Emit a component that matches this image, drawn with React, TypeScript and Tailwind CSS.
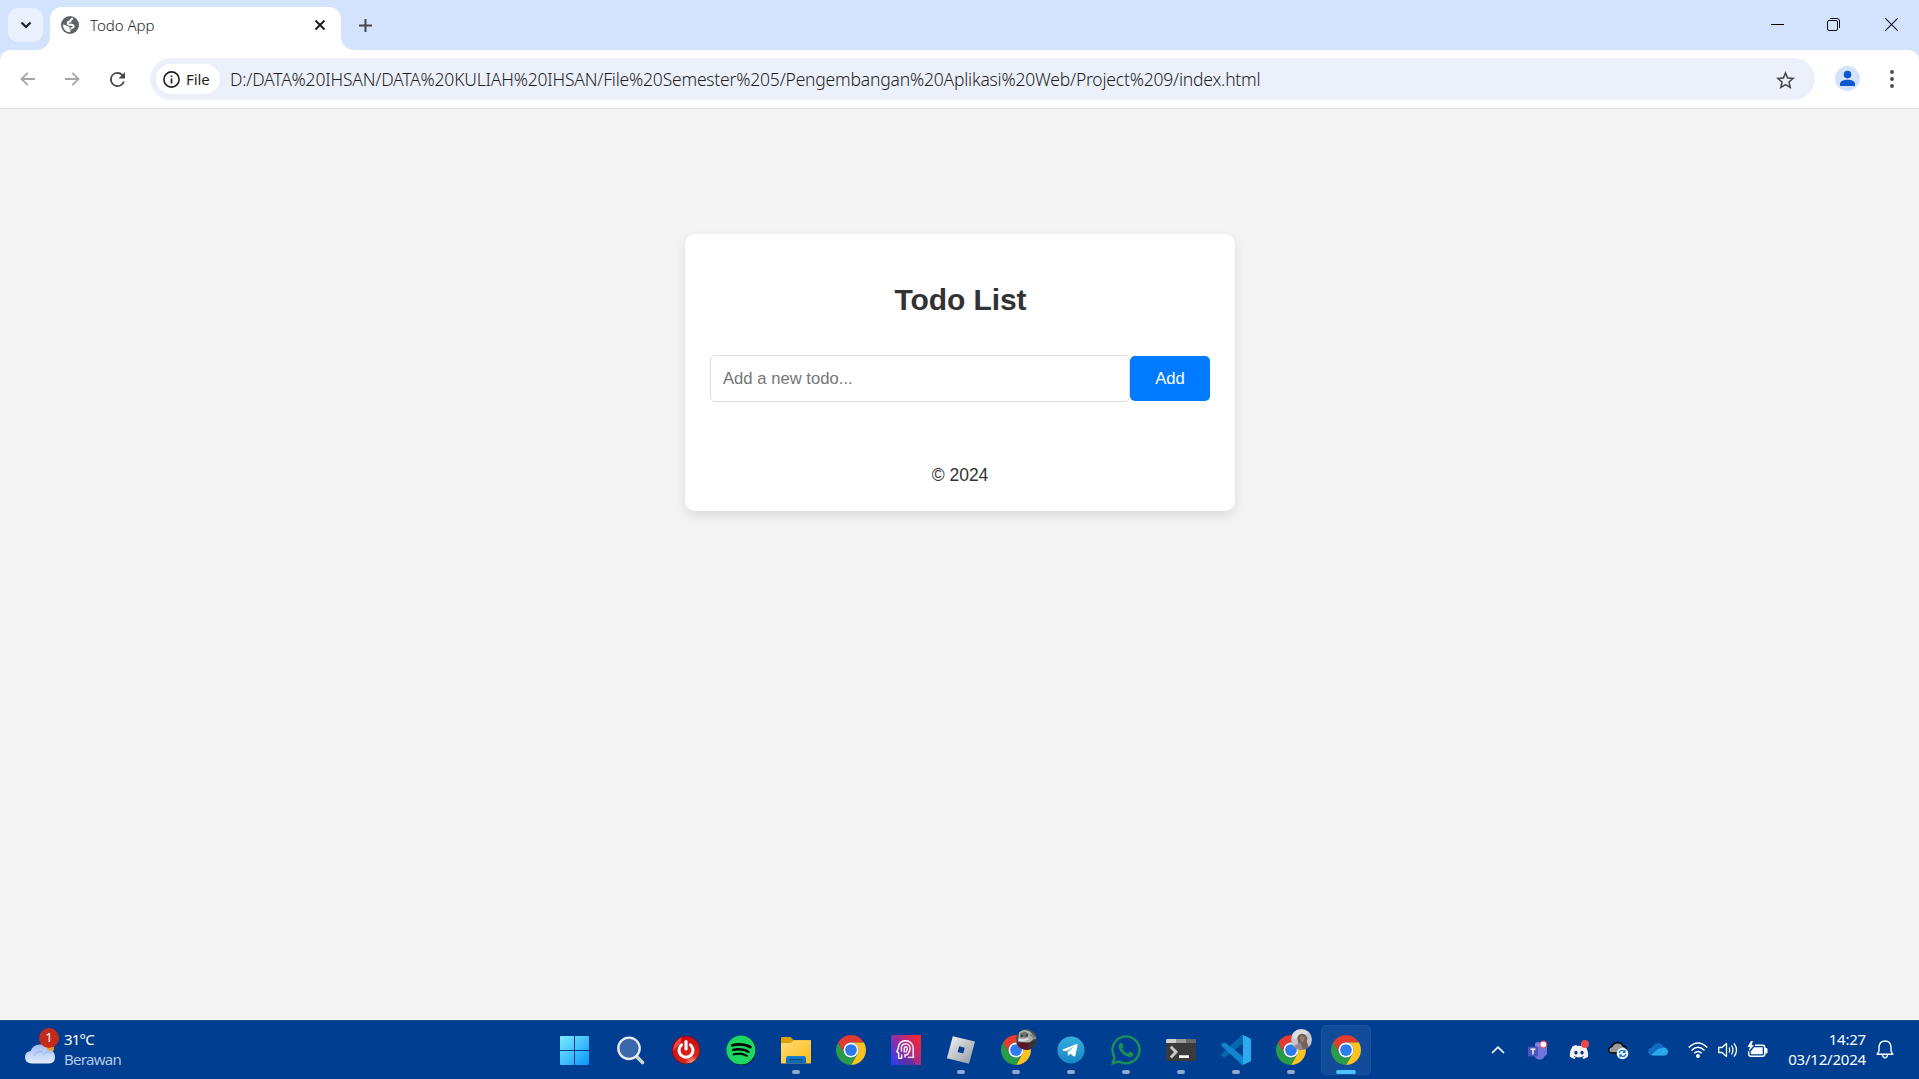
import React from "react";
import { FaSpotify, FaWhatsapp, FaDiscord } from "react-icons/fa";

function ChromeLogo() {
  return (
    <svg viewBox="0 0 48 48" className="size-[30px]">
      <path fill="#e33b2e" d="M24 12H44.78A24 24 0 0 0 3.22 12L13.61 30A12 12 0 0 1 24 12Z" />
      <path fill="#fcc31e" d="M34.39 30L24 48A24 24 0 0 0 44.78 12H24A12 12 0 0 1 34.39 30Z" />
      <path fill="#2a9c48" d="M13.61 30L3.22 12A24 24 0 0 0 24 48L34.39 30A12 12 0 0 1 13.61 30Z" />
      <circle cx="24" cy="24" r="12" fill="#fff" />
      <circle cx="24" cy="24" r="9.4" fill="#2f7bee" />
    </svg>
  );
}

function ChromeProfile({ kind }: { kind: "train" | "person" }) {
  return (
    <div className="relative size-[30px]">
      <ChromeLogo />
      <svg viewBox="0 0 20 20" className="absolute -top-[6px] left-[15px] size-[21px]">
        <defs>
          <clipPath id={"clip-" + kind}><circle cx="10" cy="10" r="10" /></clipPath>
        </defs>
        {kind === "train" ? (
          <g clipPath="url(#clip-train)">
            <rect width="20" height="20" fill="#4c524f" />
            <path d="M3 3Q8-1 14 3L18 8 13 13 2 12Z" fill="#aab0ae" />
            <path d="M4 4.500Q8 1 12 4.500L11 8 4 8Z" fill="#66706c" />
            <path d="M3 9Q7 11 12 8L12 10Q7 12.500 2 11Z" fill="#e2e5e4" />
            <circle cx="5.500" cy="6.500" r="1" fill="#333" />
            <circle cx="10.500" cy="6" r="1" fill="#333" />
            <path d="M0 13L13 13 13 20 0 20Z" fill="#5d1426" />
            <path d="M12 13L20 9V20H12Z" fill="#33353a" />
            <path d="M14 4L20 9 17 10 13 6Z" fill="#85898a" />
          </g>
        ) : (
          <g clipPath="url(#clip-person)">
            <rect width="20" height="20" fill="#c4c5c7" />
            <path d="M0 4Q8-3 17 3L13 6 3 10Z" fill="#dcdddd" />
            <path d="M6 8Q8 3 13 5Q17 8 15 12L18 20H3L7 14Z" fill="#75625c" />
            <path d="M9 7Q13 6 13 10L11 13Q8 11 9 7Z" fill="#9a7b6f" />
            <path d="M3 16L9 13 12 20H3Z" fill="#8f8a8c" />
          </g>
        )}
      </svg>
    </div>
  );
}

function WindowsLogo() {
  return (
    <svg viewBox="0 0 29 29" className="mr-[3px] size-[29px]">
      <defs>
        <linearGradient id="win" x1="0" y1="0" x2="29" y2="29" gradientUnits="userSpaceOnUse">
          <stop stopColor="#7cecff" />
          <stop offset="1" stopColor="#0a96f8" />
        </linearGradient>
      </defs>
      <path fill="url(#win)" d="M0 1Q0 0 1 0H14V14H0ZM15 0H28Q29 0 29 1V14H15ZM0 15H14V29H1Q0 29 0 28ZM15 15H29V28Q29 29 28 29H15Z" />
    </svg>
  );
}

function SearchLogo() {
  return (
    <svg viewBox="0 0 28 29" className="h-[29px] w-[28px]">
      <path d="M19 20L25.5 26.5" stroke="#cfd3d8" strokeWidth="3.6" strokeLinecap="round" />
      <circle cx="12" cy="12.3" r="10.7" fill="#3b68a8" stroke="#e9ebee" strokeWidth="2.3" />
    </svg>
  );
}

function PowerLogo() {
  return (
    <svg viewBox="0 0 30 30" className="size-[30px]">
      <defs>
        <radialGradient id="pw" cx=".72" cy=".95" r=".9">
          <stop stopColor="#ffb09a" />
          <stop offset=".28" stopColor="#d8261c" />
          <stop offset="1" stopColor="#d10a10" />
        </radialGradient>
      </defs>
      <circle cx="15" cy="15" r="14" fill="url(#pw)" stroke="#5a1430" strokeWidth=".9" />
      <path d="M2 16Q3 6 11 2L9 9Z" fill="#e86a5c" opacity=".7" />
      <path d="M10.6 9.8A7 7 0 1 0 19.4 9.8" fill="none" stroke="#fff" strokeWidth="3" strokeLinecap="round" />
      <path d="M15 6.5V14" stroke="#fff" strokeWidth="3.2" strokeLinecap="round" />
    </svg>
  );
}

function FolderLogo() {
  return (
    <svg viewBox="0 0 30 27" className="h-[27px] w-[30px]">
      <defs>
        <linearGradient id="fo" x1="0" y1="0" x2="1" y2="1">
          <stop stopColor="#ffdd77" />
          <stop offset="1" stopColor="#fbba16" />
        </linearGradient>
        <linearGradient id="fb" x1="0" y1="0" x2="0" y2="1">
          <stop stopColor="#1582cf" />
          <stop offset="1" stopColor="#0a62ae" />
        </linearGradient>
      </defs>
      <path d="M0 1.2Q0 0 1.2 0H9.5L12.5 3H30V10H0Z" fill="#e0a108" />
      <path d="M0 6H9.5L13 3.2H29Q30 3.2 30 4.2V26.6H0Z" fill="url(#fo)" />
      <path d="M5 26.6V21Q5 19 7 19H23Q25 19 25 21V26.6Z" fill="url(#fb)" />
      <path d="M8.5 22.6H21.5" stroke="#06457f" strokeWidth="1.2" />
    </svg>
  );
}

function HeadLogo() {
  return (
    <svg viewBox="0 0 30 30" className="size-[30px]">
      <defs>
        <linearGradient id="hd" x1="0" y1=".85" x2="1" y2=".15">
          <stop stopColor="#2d3cf0" />
          <stop offset=".5" stopColor="#a02c94" />
          <stop offset="1" stopColor="#fb2430" />
        </linearGradient>
      </defs>
      <rect width="30" height="30" fill="url(#hd)" />
      <path d="M6 23L20 23 26 30H8Z" fill="#3a2c9c" opacity=".45" />
      <g fill="none" stroke="#fff" strokeWidth="1.4" strokeLinejoin="round">
        <path d="M7.6 23.4V17.8L5.8 16.6 7.2 13.5C7.2 8.5 10.3 5.8 14.4 5.8C19 5.8 22.3 9 22.3 13.4C22.3 16.2 21.4 17.6 22.6 22.4H17" />
        <path d="M7.6 23.4H10.6V19.500M14 22.400V19.800H16.500C17.500 17.500 19.200 15.800 19.200 13.400C19.200 10.700 17.400 8.900 14.600 8.900C12 8.900 10.400 10.400 10.400 13.200V16.500" />
        <path d="M13.200 17.500V13.500C13.200 12.300 13.700 11.700 14.700 11.700C15.800 11.700 16.400 12.400 16.400 13.500C16.400 15 15 15.800 15 17.500" />
      </g>
    </svg>
  );
}

function RobloxLogo() {
  return (
    <svg viewBox="0 0 30 30" className="size-[30px]">
      <defs>
        <linearGradient id="rb" x1="0" y1="0" x2="1" y2="1">
          <stop stopColor="#f4f5f6" />
          <stop offset="1" stopColor="#8f979f" />
        </linearGradient>
      </defs>
      <path fill="url(#rb)" fillRule="evenodd" d="M6.8 1.2L29 6.6 23 28.8.9 23.2ZM13.2 11.2L11.6 17 17.2 18.6 18.8 12.8Z" />
    </svg>
  );
}

function TelegramLogo() {
  return (
    <svg viewBox="0 0 28 28" className="size-[28px]">
      <defs>
        <linearGradient id="tg" x1="0" y1="0" x2="0" y2="1">
          <stop stopColor="#37aee2" />
          <stop offset="1" stopColor="#1687c4" />
        </linearGradient>
      </defs>
      <circle cx="14" cy="14" r="13.6" fill="url(#tg)" />
      <path fill="#fff" d="M5.6 13.6L19.6 8.1Q20.8 7.8 20.6 9.2L18.3 19.8Q18 21 16.9 20.4L13.3 17.8 11.6 19.5Q11 20 10.9 19L10.6 15.8 17.4 10.4 9 15.3 5.8 14.5Q5 14 5.6 13.6Z" />
    </svg>
  );
}

function TerminalLogo() {
  return (
    <svg viewBox="0 0 30 22" className="h-[22px] w-[30px]">
      <rect width="30" height="22" rx="1.2" fill="#3b3b3b" />
      <path d="M0 4V1.2Q0 0 1.2 0H10V4Z" fill="#d0d0d0" />
      <path d="M10 0H20V4H10Z" fill="#9a9a9a" />
      <path d="M20 0H28.8Q30 0 30 1.2V4H20Z" fill="#6a6a6a" />
      <path d="M4.8 7.8L10 13.1 4.8 18.4" fill="none" stroke="#c9c9c9" strokeWidth="2.9" />
      <path d="M13 16.2H23V19H13Z" fill="#f4f4f4" />
    </svg>
  );
}

function CodeLogo() {
  return (
    <svg viewBox="0 0 30 30" className="size-[30px]">
      <path d="M22 0V8.5L4.5 22 2.7 22.4.4 20.4Q0 19.7.6 19.1L20.6.6Z" fill="#0669b0" />
      <path d="M22 30V21.5L4.5 8 2.7 7.6.4 9.6Q0 10.3.6 10.9L20.6 29.4Z" fill="#1384cf" />
      <path d="M20.6.6Q21.4-.2 22.4.2L29 3.2Q30 3.8 30 4.8V25.2Q30 26.2 29 26.8L22.4 29.8Q21.4 30.2 20.6 29.4Q22 30 22 28V2Q22 0 20.6.6Z" fill="#2cabf0" />
    </svg>
  );
}

type TaskProps = { children: React.ReactNode; running?: boolean; active?: boolean };

function Task({ children, running, active }: TaskProps) {
  return (
    <div className="relative flex h-[58px] w-[55px] items-center justify-center pl-px">
      {active && <div className="absolute top-[4px] left-[3px] h-[50px] w-[50px] rounded-[5px] border border-[#1d529f] bg-[#124b99]" />}
      <div className="relative">{children}</div>
      {running && <div className="absolute top-[49px] left-[24px] h-1 w-2 rounded-full bg-[#94a9cf]" />}
      {active && <div className="absolute top-[49px] left-[18px] h-1 w-5 rounded-full bg-[#4cc2ff]" />}
    </div>
  );
}

function TabStrip() {
  return (
    <div className="flex h-[50px] shrink-0 bg-[#d3e2fd] pl-2">
      <div className="mt-2 flex h-[34px] w-[35px] items-center justify-center rounded-[10px] bg-[#eaf1fe]">
        <svg viewBox="0 0 12 8" className="h-2 w-3"><path d="M1.5 1.5L6 6 10.5 1.5" fill="none" stroke="#1f1f1f" strokeWidth="2.2" /></svg>
      </div>
      <svg viewBox="0 0 15 15" className="-ml-2 mt-[35px] size-[15px]"><path d="M15 0V15H0Q15 15 15 0Z" fill="#fff" /></svg>
      <div className="mt-[7px] flex h-[43px] w-[291px] items-center rounded-t-[12px] bg-white pr-[15px] pb-[7px] pl-[11px]">
        <svg viewBox="0 0 18 18" className="size-[18px]">
          <circle cx="9" cy="9" r="9" fill="#5f6368" />
          <path d="M1.800 8.500Q5.500 9 7 10.200Q9 10.800 8.500 12.500L9.800 13.200 9 16.200Q2.500 16.200 1.800 8.500Z" fill="#fff" />
          <path d="M12 2.300Q9.200 3.300 9.300 5.500Q6.300 5.400 6.800 7.400Q7.200 8.900 10.400 8.700Q13.600 9.300 12.400 11.300Q11 12.200 9.800 12.500" fill="none" stroke="#fff" strokeWidth="1.900" />
        </svg>
        <span className="ml-[11px] flex-1 text-[15px] leading-5 font-light text-[#1f1f1f]">Todo App</span>
        <svg viewBox="0 0 12 12" className="size-3"><path d="M1.5 1.5L10.5 10.5M10.5 1.5L1.5 10.5" stroke="#1f1f1f" strokeWidth="2" /></svg>
      </div>
      <svg viewBox="0 0 15 15" className="mt-[35px] size-[15px]"><path d="M0 0V15H15Q0 15 0 0Z" fill="#fff" /></svg>
      <svg viewBox="0 0 13 13" className="mt-[19px] ml-[3px] size-[13px]"><path d="M6.5 0V13M0 6.5H13" stroke="#474747" strokeWidth="2" /></svg>
      <div className="ml-auto flex gap-[43px] pt-[18px] pr-[21px]">
        <svg viewBox="0 0 13 13" className="size-[13px]"><path d="M0 6.5H13" stroke="#000" /></svg>
        <svg viewBox="0 0 13 13" className="size-[13px]" fill="none" stroke="#111">
          <rect x=".5" y="2.5" width="10" height="10" rx="1.5" />
          <path d="M3 .5H10Q12.5.5 12.5 3V10" />
        </svg>
        <svg viewBox="0 0 13 13" className="ml-[2px] size-[13px]"><path d="M0 0L13 13M13 0L0 13" stroke="#111" strokeWidth="1.1" /></svg>
      </div>
    </div>
  );
}

function Toolbar() {
  return (
    <div className="h-[59px] shrink-0 bg-[#d3e2fd]">
      <div className="flex h-[59px] items-start rounded-t-[10px] border-b border-[#dfe1e4] bg-white pt-2">
        <div className="flex h-[42px] w-[150px] items-center pl-5">
          <svg viewBox="0 0 15 14" className="h-[14px] w-[15px]"><path d="M15 7H1.5M7.7.8L1.5 7 7.7 13.2" fill="none" stroke="#a5a6a8" strokeWidth="1.8" /></svg>
          <svg viewBox="0 0 15 14" className="ml-[30px] h-[14px] w-[15px]"><path d="M0 7H13.5M7.3.8L13.5 7 7.3 13.2" fill="none" stroke="#a5a6a8" strokeWidth="1.8" /></svg>
          <svg viewBox="4 4 16 16" className="ml-[30px] size-[15px]"><path fill="#474747" d="M17.65 6.35A7.96 7.96 0 0 0 12 4a8 8 0 1 0 7.73 10h-2.08A6 6 0 1 1 12 6c1.66 0 3.14.69 4.22 1.78L13 11h7V4z" /></svg>
        </div>
        <div className="flex h-[42px] w-[1665px] items-center rounded-full bg-[#ebf0fa] pr-5 pl-[6px]">
          <div className="flex h-[30px] w-[64px] items-center rounded-full bg-white pl-[7px] text-[15px] tracking-[-0.1px] text-[#1f1f1f]">
            <svg viewBox="0 0 17 17" className="size-[17px]">
              <circle cx="8.5" cy="8.5" r="7.6" fill="none" stroke="#1f1f1f" strokeWidth="1.6" />
              <path d="M8.5 7.5V12.5M8.5 4.4V6" stroke="#1f1f1f" strokeWidth="1.7" />
            </svg>
            <span className="ml-[6px]">File</span>
          </div>
          <span className="mt-px ml-[10px] text-[17.5px] font-[350] tracking-[-0.2px] whitespace-nowrap text-[#1f1f1f]">
            D:/DATA%20IHSAN/DATA%20KULIAH%20IHSAN/File%20Semester%205/Pengembangan%20Aplikasi%20Web/Project%209/index.html
          </span>
          <svg viewBox="2 2 20 19" className="mt-[1px] ml-auto h-[18px] w-[19px]"><path fill="#474747" d="M22 9.24l-7.19-.62L12 2 9.19 8.63 2 9.24l5.46 4.73L5.82 21 12 17.27 18.18 21l-1.63-7.03L22 9.24zM12 15.4l-3.76 2.27 1-4.28-3.32-2.88 4.38-.38L12 6.1l1.71 4.04 4.38.38-3.32 2.88 1 4.28L12 15.4z" /></svg>
        </div>
        <svg viewBox="0 0 25 25" className="mt-2 ml-5 size-[25px]">
          <circle cx="12.5" cy="12.5" r="12.5" fill="#d3e3fd" />
          <circle cx="12.5" cy="8.6" r="3.8" fill="#0b57d0" />
          <path d="M5 20V18C5 15 9 13.8 12.5 13.8S20 15 20 18V20Z" fill="#0b57d0" />
        </svg>
        <svg viewBox="0 0 4 18" className="mt-3 ml-[30px] h-[18px] w-1" fill="#474747">
          <circle cx="2" cy="2" r="1.900" /><circle cx="2" cy="9" r="1.900" /><circle cx="2" cy="16" r="1.900" />
        </svg>
      </div>
    </div>
  );
}

function TodoCard() {
  return (
    <section className="mx-auto mt-[125px] flex h-[277px] w-[550px] flex-col rounded-[10px] bg-white px-[25px] text-[#333] shadow-[0_5px_12px_rgba(0,0,0,0.1)]">
      <h1 className="mt-[48px] pl-[2px] text-center text-[30px] leading-[35px] font-bold tracking-[-0.1px]">Todo List</h1>
      <form className="mt-[38px] flex h-[47px] items-center" onSubmit={(e) => e.preventDefault()}>
        <input
          className="h-[47px] w-[420px] rounded-[5px] border border-[#ddd] px-[12.5px] text-[16.67px] placeholder:text-[#757575]"
          placeholder="Add a new todo..."
        />
        <button className="h-[45px] w-[80px] rounded-[5px] bg-[#007bff] pl-px text-[16.67px] text-white">Add</button>
      </form>
      <footer className="mt-[63px] pl-px text-center text-[17.5px] leading-5">© 2024</footer>
    </section>
  );
}

function Taskbar() {
  return (
    <div className="flex h-[59px] shrink-0 border-t border-[#1c4a86] bg-[#003e92] text-white">
      <div className="flex w-[548px] pl-6">
        <div className="relative mt-[7px] h-[38px] w-[36px]">
          <svg viewBox="0 0 36 38" className="h-[38px] w-[36px]">
            <defs>
              <linearGradient id="cl" x1="0" y1="0" x2="0" y2="1">
                <stop stopColor="#9dbcf2" /><stop offset="1" stopColor="#e3edff" />
              </linearGradient>
            </defs>
            <circle cx="23" cy="20" r="7" fill="#f29a2c" />
            <path d="M8 35.5Q1 35 1 29Q1 24 6.5 23Q9 16.500 15.500 16.500Q22 17 24 22.500Q31 22 31 29Q31 35 25 35.500Z" fill="url(#cl)" />
            <path d="M10 28Q13 22 19 24M19 27Q23 22 28 25" fill="none" stroke="#84a5e2" opacity=".6" />
          </svg>
          <div className="absolute top-0 left-[15px] flex size-[20px] items-center justify-center rounded-full bg-[#c42b1c] text-[13px]">1</div>
        </div>
        <div className="ml-1 pt-[8px] text-[15px] leading-5">
          <div className="tracking-[-0.8px]">31°C</div>
          <div className="tracking-[-0.7px] text-[#b7c8e2]">Berawan</div>
        </div>
      </div>
      <div className="flex w-[826px]">
        <Task><WindowsLogo /></Task>
        <Task><SearchLogo /></Task>
        <Task><PowerLogo /></Task>
        <Task><div className="flex size-[29px] items-center justify-center rounded-full bg-black"><FaSpotify className="size-[30px] shrink-0 text-[#1ed760]" /></div></Task>
        <Task running><FolderLogo /></Task>
        <Task><ChromeLogo /></Task>
        <Task><HeadLogo /></Task>
        <Task running><RobloxLogo /></Task>
        <Task running><ChromeProfile kind="train" /></Task>
        <Task running><TelegramLogo /></Task>
        <Task running><FaWhatsapp className="size-[34px] text-[#1b8f55]" /></Task>
        <Task running><TerminalLogo /></Task>
        <Task running><CodeLogo /></Task>
        <Task running><ChromeProfile kind="person" /></Task>
        <Task active><ChromeLogo /></Task>
      </div>
      <div className="flex flex-1 items-center justify-end pr-[25px] pb-px">
        <svg viewBox="0 0 14 8" className="mr-[23px] h-2 w-[14px]"><path d="M1 7L7 1.2 13 7" fill="none" stroke="#fff" strokeWidth="1.7" /></svg>
        <svg viewBox="0 0 20 20" className="mr-[21px] size-5">
          <circle cx="10" cy="5" r="3" fill="#7b83eb" />
          <path d="M6 7H19V14Q18 16 16.500 16.200Q15 20 11 19.500Q7 19 6 15Z" fill="#6e75dc" />
          <rect x="0" y="6.500" width="10" height="10" rx=".8" fill="#4b53bc" />
          <path d="M2.500 9.200H7.500M5 9.200V14.500" stroke="#fff" strokeWidth="1.400" />
          <circle cx="15.300" cy="4.500" r="3.400" fill="#fff" stroke="#d65a6c" strokeWidth="1.300" />
        </svg>
        <div className="relative mr-[19px] size-5">
          <FaDiscord className="size-5 pt-1 text-[#f3f0ef]" />
          <div className="absolute top-0 left-[12px] size-[8px] rounded-full bg-[#f04747]" />
        </div>
        <svg viewBox="0 0 21 20" className="mr-[19px] h-5 w-[21px]">
          <path d="M4 13Q.7 13 .7 9.500Q1 7 4 6.500Q5.500 2.500 10 2.500Q14 3 15 6Q18 6.500 18.500 9.500Q18 13 15 13Z" fill="#999" stroke="#000" strokeWidth="1.300" />
          <circle cx="14.500" cy="13.500" r="5.800" fill="#eef6ff" />
          <path d="M11 13Q12 10 15 10.500L17 12M17 10V12.300H14.800M18 14Q17 17 14 16.500L12 15M12 17V14.800H14" fill="none" stroke="#1976c9" strokeWidth="1.200" />
        </svg>
        <svg viewBox="0 0 20 13" className="mr-[20px] h-[13px] w-5">
          <path d="M4.500 12.500Q0 12 0 8.500Q.5 5 4 4.500Q6 0 10 0Q14 .5 15.500 4Q20 5 20 9Q19 12.500 16 12.500Z" fill="#0f6cc0" />
          <path d="M3 12L10 6 15.500 4.500Q20 5 20 9Q19 12.500 16 12.500H4.500Z" fill="#28a8ea" />
        </svg>
        <svg viewBox="0 0 20 16" className="mr-[10px] h-4 w-5" fill="none" stroke="#fff" strokeWidth="1.500">
          <path d="M.7 5.500Q10-3.500 19.300 5.500M3.500 8.500Q10 2 16.500 8.500M6.300 11.300Q10 7.500 13.700 11.300" />
          <circle cx="10" cy="14" r="1.200" fill="#fff" />
        </svg>
        <svg viewBox="0 0 20 16" className="mr-[9px] h-4 w-5" fill="none" stroke="#fff" strokeWidth="1.300">
          <path d="M.7 5.500H4L8.500 1.500V14.500L4 10.500H.7Z" strokeLinejoin="round" />
          <path d="M11 5.500Q12.500 8 11 10.500M13.500 3.500Q16.500 8 13.500 12.500M16 1.300Q21 8 16 14.700" />
        </svg>
        <svg viewBox="0 0 21 17" className="mr-[18px] h-[17px] w-[21px]">
          <path d="M8 4.200H15.500Q17.800 4.200 17.800 6.500V13Q17.800 15.300 15.500 15.300H4Q1.700 15.300 1.700 13V10.500" fill="none" stroke="#fff" strokeWidth="1.500" />
          <path d="M18.500 7.500H20V12H18.500Z" fill="#fff" stroke="#fff" />
          <path d="M8 6.300H15.700V13.200H3.800V10.500L7 6.300Z" fill="#fff" />
          <path d="M4 0L.5 6H3L1.500 10.500 7 4.200H4.500L6 0Z" fill="#fff" />
        </svg>
        <div className="w-[80px] pb-[2px] text-right text-[15px] leading-5 tracking-[-0.2px] whitespace-nowrap">
          <div>14:27</div>
          <div>03/12/2024</div>
        </div>
        <svg viewBox="0 0 18 19" className="ml-[10px] h-[19px] w-[18px]" fill="none" stroke="#fff" strokeWidth="1.400">
          <path d="M1.200 14.300L3 11V7Q3.500 1 9 1T15 7V11L16.800 14.300Z" strokeLinejoin="round" />
          <path d="M6.500 15Q7 17.800 9 17.800T11.500 15" />
        </svg>
      </div>
    </div>
  );
}

export default function App() {
  return (
    <div className="flex h-[1079px] w-[1919px] flex-col overflow-hidden bg-[#f3f3f3] font-['Noto_Sans','Open_Sans',sans-serif]">
      <TabStrip />
      <Toolbar />
      <main className="flex-1 bg-[#f4f4f4] font-['Liberation_Sans',Arial,sans-serif]">
        <TodoCard />
      </main>
      <Taskbar />
    </div>
  );
}
